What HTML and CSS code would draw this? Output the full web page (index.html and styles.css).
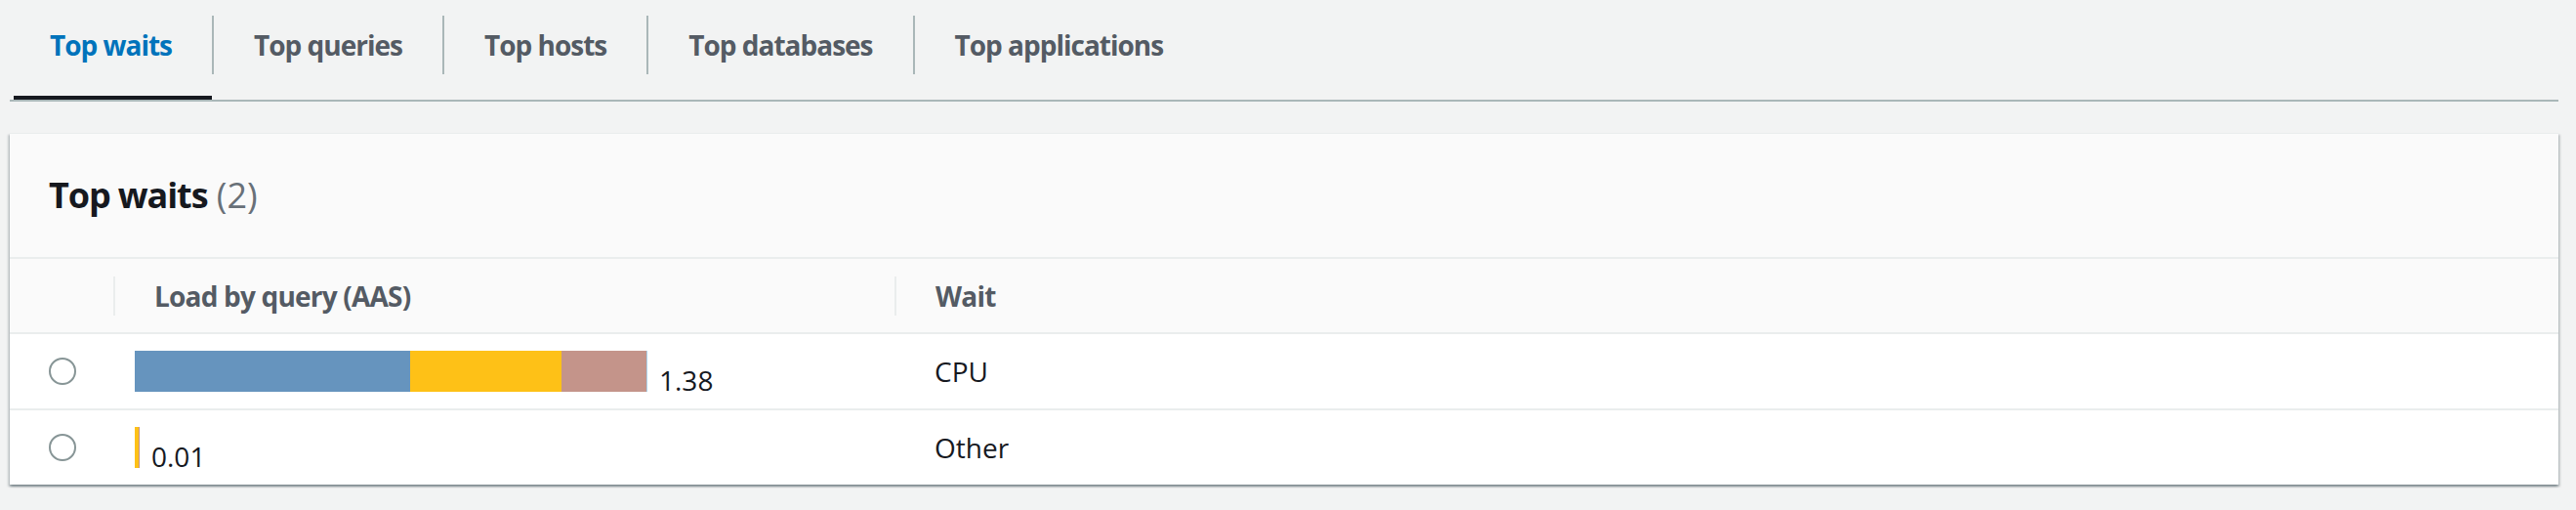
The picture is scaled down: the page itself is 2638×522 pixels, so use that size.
FILE: index.html
```html
<!DOCTYPE html>
<html lang="en">
<head>
<meta charset="utf-8">
<title>Top waits</title>
<link rel="stylesheet" href="styles.css">
</head>
<body>
<div class="page">
  <nav class="tabs">
    <div class="tab active">Top waits</div>
    <span class="sep"></span>
    <div class="tab">Top queries</div>
    <span class="sep"></span>
    <div class="tab">Top hosts</div>
    <span class="sep"></span>
    <div class="tab">Top databases</div>
    <span class="sep"></span>
    <div class="tab">Top applications</div>
  </nav>

  <section class="card">
    <header class="card-header">
      <h2 class="title"><span class="title-text">Top waits</span> <span class="count">(2)</span></h2>
    </header>
    <div class="table">
      <div class="row head">
        <div class="cell sel"></div>
        <div class="cell col">Load by query (AAS)</div>
        <div class="cell col">Wait</div>
      </div>
      <div class="row body">
        <div class="cell sel"><span class="radio"></span></div>
        <div class="cell load">
          <div class="bars">
            <span class="seg s-blue" style="width:282px"></span>
            <span class="seg s-yellow" style="width:155px"></span>
            <span class="seg s-rose" style="width:87px"></span>
            <span class="seg s-sky" style="width:1px"></span>
          </div>
          <span class="val">1.38</span>
        </div>
        <div class="cell text">CPU</div>
      </div>
      <div class="row body">
        <div class="cell sel"><span class="radio"></span></div>
        <div class="cell load">
          <div class="bars">
            <span class="seg s-yellow" style="width:4px"></span>
            <span class="seg s-rose" style="width:1px"></span>
          </div>
          <span class="val">0.01</span>
        </div>
        <div class="cell text">Other</div>
      </div>
    </div>
  </section>
</div>
</body>
</html>
```

FILE: styles.css
```css
* {
  box-sizing: border-box;
}

html,
body {
  margin: 0;
  padding: 0;
  background: #f2f3f3;
}

body {
  font-family: "Open Sans", "Noto Sans", "Liberation Sans", sans-serif;
  color: #16191f;
  font-size: 28px;
}

.page {
  padding: 0 18px 0 10px;
  height: 522px;
}

/* Tabs */
.tabs {
  display: flex;
  align-items: flex-start;
  padding-left: 4px;
  border-bottom: 2px solid #aab7b8;
  height: 104px;
}

.tab {
  display: flex;
  align-items: center;
  height: 102px;
  padding: 0 41px 10px 41px;
  font-size: 28px;
  font-weight: 700;
  letter-spacing: -1px;
  color: #545b64;
  white-space: nowrap;
}

.tab.active {
  padding-left: 37px;
  padding-bottom: 6px;
  border-bottom: 4px solid #16191f;
  color: #0073bb;
}

.sep {
  flex: none;
  width: 2px;
  height: 60px;
  margin-top: 16px;
  background: #aab7b8;
}

/* Card */
.card {
  margin-top: 32px;
  background: #ffffff;
  border-top: 1px solid #eaeded;
  box-shadow: 0 2px 2px 0 rgba(0, 28, 36, 0.3),
    2px 2px 2px 0 rgba(0, 28, 36, 0.15),
    -2px 2px 2px 0 rgba(0, 28, 36, 0.15);
}

.card-header {
  display: flex;
  align-items: center;
  height: 126px;
  padding-left: 40px;
  background: #fafafa;
}

.title {
  margin: 0;
  font-size: 36px;
  font-weight: 700;
  color: #16191f;
  line-height: 1.2;
}

.title-text {
  letter-spacing: -1.1px;
}

.count {
  font-weight: 400;
  color: #687078;
}

/* Table */
.row {
  display: grid;
  grid-template-columns: 106px 800px 1fr;
  border-top: 2px solid #eaeded;
}

.row.head {
  height: 77px;
  background: #fafafa;
}

.row.body {
  height: 78px;
  background: #ffffff;
}

.cell {
  display: flex;
  align-items: center;
  min-width: 0;
}

.col {
  padding-left: 42px;
  font-weight: 700;
  letter-spacing: -0.8px;
  color: #545b64;
  background: linear-gradient(#eaeded, #eaeded) left center / 2px 40px no-repeat;
}

.sel {
  padding-left: 40px;
}

.radio {
  display: block;
  width: 28px;
  height: 28px;
  border: 2px solid #879596;
  border-radius: 50%;
  background: #ffffff;
}

.load {
  padding-left: 22px;
}

.bars {
  display: flex;
  height: 42px;
}

.seg {
  display: block;
  height: 42px;
}

.s-blue {
  background: #6694be;
}

.s-yellow {
  background: #fec117;
}

.s-rose {
  background: #c4948a;
}

.s-sky {
  background: #a9d1ea;
}

.val {
  align-self: flex-end;
  margin-left: 12px;
  line-height: 21px;
  margin-bottom: 18px;
}

.text {
  padding-left: 41px;
}
```
